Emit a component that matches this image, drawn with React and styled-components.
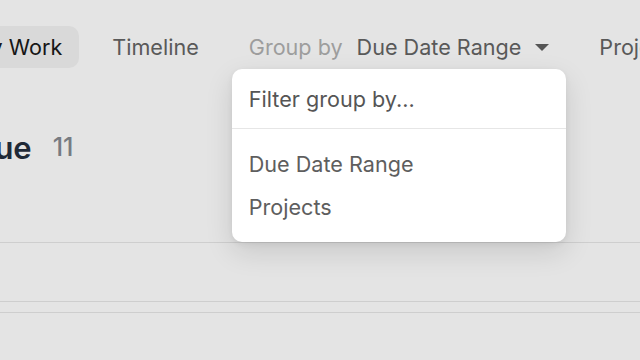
import React from 'react'
import styled, { createGlobalStyle } from 'styled-components'

const GlobalStyle = createGlobalStyle`
  html, body {
    margin: 0;
    padding: 0;
    background: #e4e4e4;
    overflow: hidden;
  }
  body {
    font-family: Inter, "Noto Sans", sans-serif;
    width: 640px;
    height: 360px;
  }
`

const Page = styled.div`
  padding-top: 26px;
  margin-left: -46px;
  width: 760px;
`

const Nav = styled.nav`
  display: flex;
  align-items: center;
  gap: 16px;
  height: 42px;
`

const Tab = styled.div`
  position: relative;
  display: flex;
  align-items: center;
  height: 42px;
  padding: 0 17px;
  border-radius: 10px;
  font-size: 21.6px;
  color: ${p => (p.active ? '#161616' : '#595959')};
  background: ${p => (p.active ? '#d9d9d9' : 'transparent')};
  white-space: nowrap;
`

const Muted = styled.span`
  color: #9d9d9d;
  margin-right: 14px;
`

const Caret = styled.svg`
  margin-left: 14px;
  width: 14px;
  height: 7px;
`

const Menu = styled.div`
  position: absolute;
  top: 100%;
  left: 0;
  right: 0;
  margin-top: 1px;
  background: #fff;
  border-radius: 10px;
  box-shadow: 0 10px 28px rgba(0, 0, 0, 0.12), 0 2px 6px rgba(0, 0, 0, 0.06);
  z-index: 5;
`

const MenuHeader = styled.div`
  height: 59px;
  display: flex;
  align-items: center;
  padding: 0 17px;
  font-size: 21.6px;
  color: #555;
  border-bottom: 1px solid #e6e6e6;
`

const MenuList = styled.div`
  padding: 13px 0 14px;
`

const MenuItem = styled.div`
  height: 43px;
  display: flex;
  align-items: center;
  padding: 0 17px;
  font-size: 21.6px;
  color: #5e5e5e;
`

const Heading = styled.div`
  margin-top: 59px;
  height: 40px;
  display: flex;
  align-items: center;
  gap: 21px;
  padding-left: 18px;
`

const Title = styled.h1`
  margin: 0;
  font-size: 31px;
  font-weight: 600;
  color: #1f2937;
`

const Count = styled.span`
  font-size: 25px;
  font-weight: 500;
  color: #777b82;
`

const Rows = styled.div`
  margin-top: 75px;
  border-top: 1px solid #cecece;
`

const Row = styled.div`
  height: ${p => p.h}px;
  border-bottom: 1px solid #cecece;
`

export default function App () {
  return (
    <>
      <GlobalStyle />
      <Page>
        <Nav>
          <Tab active>My Work</Tab>
          <Tab>Timeline</Tab>
          <Tab>
            <Muted>Group by</Muted>
            Due Date Range
            <Caret viewBox='0 0 14 7'>
              <path d='M0 0 L14 0 L7 7 Z' fill='#555' />
            </Caret>
            <Menu>
              <MenuHeader>Filter group by...</MenuHeader>
              <MenuList>
                <MenuItem>Due Date Range</MenuItem>
                <MenuItem>Projects</MenuItem>
              </MenuList>
            </Menu>
          </Tab>
          <Tab>Projects</Tab>
        </Nav>
        <Heading>
          <Title>Due</Title>
          <Count>11</Count>
        </Heading>
        <Rows>
          <Row h={58} />
          <Row h={10} />
        </Rows>
      </Page>
    </>
  )
}
